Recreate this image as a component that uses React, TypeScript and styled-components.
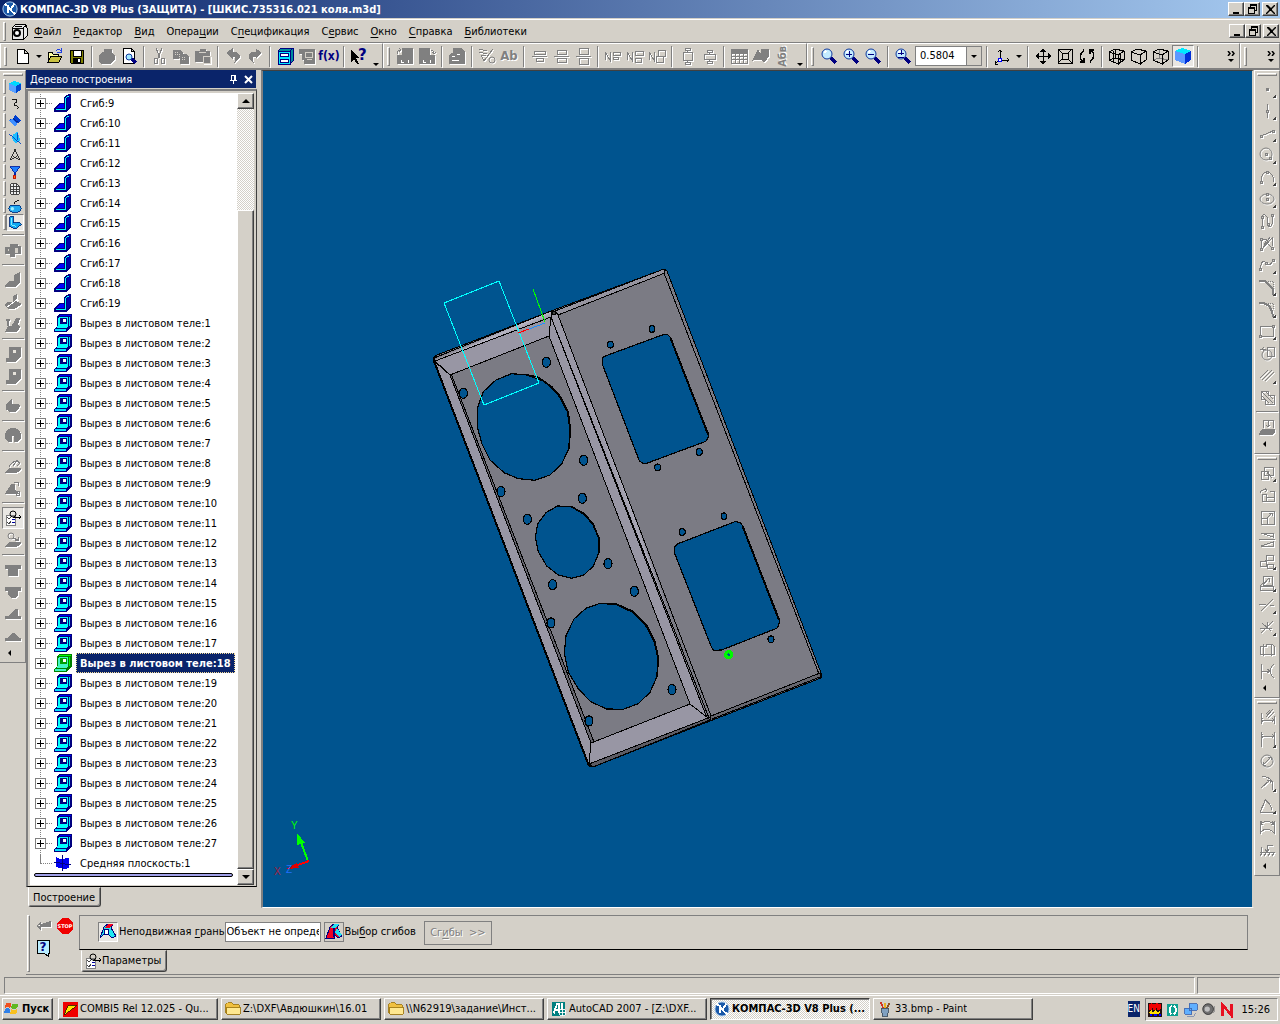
import React, { ReactNode } from "react";
import styled, { createGlobalStyle, css } from "styled-components";

const FACE = "#d4d0c8";
const SHADOW = "#808080";
const NAVY = "#0a246a";
const FONT = '"DejaVu Sans Condensed", "DejaVu Sans", "Noto Sans", sans-serif';

const Global = createGlobalStyle`
  * { box-sizing: border-box; }
  body { margin: 0; background: ${FACE}; font: 11px/14px ${FONT}; color: #000; }
  button, input, select { font: inherit; color: inherit; margin: 0; border-radius: 0; }
  button { padding: 0; border: 0; background: transparent; }
  u { text-underline-offset: 2px; }
`;

const raised = css`
  border: 1px solid;
  border-color: #fff #404040 #404040 #fff;
  box-shadow: inset -1px -1px 0 ${SHADOW};
  background: ${FACE};
`;
const pressed = css`
  border: 1px solid;
  border-color: ${SHADOW} #fff #fff ${SHADOW};
  background: #e9e7e3;
`;

/* ---------- icons, drawn on an 18 x 18 grid ---------- */
const lens = (
  <>
    <path d="M11 11L16 16" stroke="#000080" strokeWidth="3" />
    <circle cx="7" cy="7" r="5" fill="#c4ecff" stroke="#10389c" />
    <path d="M4 6L6 4" stroke="#fff" strokeWidth="2" />
  </>
);
const cube = "M3 5L9 2L15 5V12L9 16L3 12ZM3 5L9 8L15 5M9 8V16";
const cubeFront = "M1 5L10 8V17L1 13ZM1 5L7 2L16 4V13L10 17M10 8L16 4";
const corner = <path d="M18 14V18H14Z" fill="#404040" stroke="none" />;
const P = (d: string, fill = false) => <path d={d} fill={fill ? "currentColor" : "none"} stroke="currentColor" />;
const nodes = (...pts: number[][]) =>
  pts.map(([x, y]) => <rect key={`${x}-${y}`} x={x - 1} y={y - 1} width="2" height="2" fill={FACE} stroke="currentColor" />);

const icons: Record<string, ReactNode> = {
  new: <path d="M4 2H11L15 6V16H4ZM11 2V6H15" fill="#fff" stroke="#000" />,
  open: (
    <>
      <path d="M2 15V5H6L7 7H12V9" fill="#ffffa0" stroke="#000" />
      <path d="M2 15L5 9H16L13 15Z" fill="#c8c040" stroke="#000" />
      <path d="M10 4Q13 1 15 4M15 1V5H11" fill="none" stroke="#2040e0" />
    </>
  ),
  save: (
    <>
      <path d="M2 3H15V16H3L2 15Z" fill="#808000" stroke="#000" />
      <path d="M5 3H13V9H5Z" fill="#fff" stroke="#000" />
      <path d="M5 11H13V16H5Z" fill="#000" />
      <path d="M10 12H12V15H10Z" fill="#fff" />
    </>
  ),
  print: P("M2 8L6 5L7 2H14L13 6L16 8V13L13 16H3L1 13Z", true),
  preview: (
    <>
      <path d="M3 1H11L14 4V16H3ZM11 1V4H14" fill="#fff" stroke="#000" />
      <path d="M12 12L16 16" stroke="#000080" strokeWidth="3" />
      <circle cx="9" cy="10" r="3" fill="#a0e8ff" stroke="#10389c" />
    </>
  ),
  cut: (
    <>
      {P("M6 1L10 11M12 1L8 11")}
      <path d="M4 11H7V16H4ZM11 11H14V16H11Z" fill="none" stroke="currentColor" />
    </>
  ),
  copy: (
    <>
      {P("M1 3H8L10 5V11H1Z", true)}
      {P("M8 7H14L16 9V16H8Z", true)}
      <path d="M3 5H7M3 7H7M10 10H14M10 12H14M7 7V14" stroke={FACE} strokeDasharray="1 1" />
    </>
  ),
  paste: (
    <>
      {P("M1 4H6V2H11V4H15V14H1Z", true)}
      <path d="M5 5H12M9 9H16V16H9Z" fill={SHADOW} stroke={FACE} />
    </>
  ),
  undo: P("M3 6L8 2V5H12L15 8V11L11 15L12 11L10 9H8V11Z", true),
  redo: P("M15 6L10 2V5H6L3 8V11L7 15L6 11L8 9H10V11Z", true),
  lib: (
    <>
      <path d="M2 4L5 1H17V14L14 17H2Z" fill="#008c9c" stroke="#000080" />
      <path d="M2 4H14V17H2Z" fill="#00e8ff" stroke="#000080" />
      <path d="M4 6H12V9H4ZM4 12H12V15H4Z" fill="#fff" stroke="#000080" />
      <path d="M14 4L17 1" stroke="#000080" />
    </>
  ),
  props: (
    <>
      {P("M1 2H16V16H6V12H4V6H1Z", true)}
      <path d="M7 5H14V10H7ZM9 12H14" fill="none" stroke={FACE} />
    </>
  ),
  help: (
    <>
      <path d="M1 3V15L4 12L7 17H9L6 11H10Z" fill="#000" />
      <text x="8" y="13" fontSize="15" fontWeight="bold" fill="#000080">?</text>
    </>
  ),
  docL: (
    <>
      <path d="M6 1H17V17H1V8H6Z" fill="currentColor" />
      <path d="M1 7Q1 3 5 3M3 1L5 3L3 5" fill="none" stroke="currentColor" />
      <path d="M5 13V15H8M12 13V16" fill="none" stroke="#fff" />
    </>
  ),
  docR: (
    <>
      <path d="M1 1H12V8H17V17H1Z" fill="currentColor" />
      <path d="M13 3Q16 3 16 7M14 5L16 7L18 5" fill="none" stroke="currentColor" />
      <path d="M5 13V15H8M12 13V16" fill="none" stroke="#fff" />
    </>
  ),
  docs: (
    <>
      {P("M5 1H13L16 4V16H1V9L5 6Z", true)}
      <path d="M4 9H7M9 7H12M4 13H11" stroke="#fff" />
    </>
  ),
  rough: (
    <>
      {P("M1 3Q3 1 5 3T9 3M1 6Q3 4 5 6T9 6M3 8L6 14L15 2M3 8H8")}
      <circle cx="14" cy="13" r="3" fill="none" stroke="currentColor" />
    </>
  ),
  alignA: P("M4 4H15V7H4ZM2 9H17M6 11H13V14H6Z"),
  alignB: P("M5 3H14V7H5ZM2 9H17M5 11H14V15H5Z"),
  alignC: P("M5 1H14V7H5ZM2 9H17M5 11H14V17H5Z"),
  nA: P("M1 13V5L6 13V5M9 5H16V8H9ZM9 10H14V12H9Z"),
  nB: P("M1 13V5L6 13V5M9 4H17V8H9ZM9 11H15V15H9Z"),
  nC: P("M1 13V5L6 13V5M10 3H17V9H10ZM8 9H15V15H8Z"),
  boxA: P("M5 5H14V13H5ZM7 1H12V3H7ZM7 15H12V17H7ZM9 3V5M9 13V15"),
  boxB: P("M4 7H15V12H4ZM7 3H12V5H7ZM7 14H12V16H7ZM9 5V7M9 12V14"),
  table: (
    <>
      {P("M1 2H17V16H1ZM1 6H17M1 9H17M1 12H17M5 6V16M9 6V16M13 6V16")}
      <path d="M1 2H17V6H1Z" fill="currentColor" />
    </>
  ),
  shapes: P("M1 13L6 3L9 8V2H16V10L12 15L9 12Z", true),
  lens,
  plus: <>{lens}<path d="M7 4V10M4 7H10" stroke="#000080" /></>,
  minus: <>{lens}<path d="M4 7H10" stroke="#000080" /></>,
  plusminus: <>{lens}<path d="M7 3V8M4 6H10M4 10H10" stroke="#000080" /></>,
  axes: (
    <>
      <path d="M7 13V3M5 5L7 3L9 5M7 13H16M14 11L16 13L14 15M6 13L2 17M2 14V17H5" fill="none" stroke="#000" />
      <rect x="5" y="11" width="3" height="3" fill="#fff" stroke="#00f" />
    </>
  ),
  move: (
    <>
      <path d="M9 2V17M2 9H17" stroke="#000" fill="none" />
      <path d="M9 1L12 5H6ZM9 18L12 14H6ZM1 9L5 6V12ZM18 9L14 6V12Z" fill="#000" />
    </>
  ),
  fit: P("M2 2H16V16H2ZM6 6H12V12H6ZM2 2L6 6M16 2L12 6M2 16L6 12M16 16L12 12"),
  rotate: <path d="M6 3Q-1 9 5 15M2 15H6V11M12 15Q19 9 13 3M16 3H12V7" fill="none" stroke="#000" strokeWidth="1.5" />,
  wire: P(cubeFront + "M7 2V11M1 13L7 11L16 13M5 4V14M12 7V15"),
  hidden: P(cubeFront),
  thin: <><path d="M7 2V11M7 11L1 13M7 11L16 13" stroke={SHADOW} fill="none" />{P(cubeFront)}</>,
  shaded: (
    <>
      <path d="M1 4L8 1L17 4L11 7Z" fill="#00e8ff" />
      <path d="M1 4L11 7V17L1 13Z" fill="#5c98ff" />
      <path d="M11 7L17 4V13L11 17Z" fill="#0030d8" />
    </>
  ),
  body: (
    <>
      <path d="M2 5L8 2L16 5L10 8Z" fill="#00d8ff" />
      <path d="M2 5L10 8V16L2 12Z" fill="#58a0ff" />
      <path d="M10 8L16 5V12L10 16Z" fill="#0048d0" />
    </>
  ),
  curve: <path d="M6 4Q12 2 11 7Q6 9 9 11Q14 11 12 15" fill="none" stroke="#000" />,
  plane: <><path d="M2 8L7 6L9 2L16 9L12 11L9 15Z" fill="#0040d0" /><path d="M2 8L6 7L12 12L9 15Z" fill="#4090ff" /><path d="M7 6L13 11" stroke="#002080" /></>,
  surf: <><path d="M7 5L12 2L15 12L9 15L5 8Z" fill="#20c0ff" /><path d="M2 4L16 16M12 3V11" stroke="#0040c0" /></>,
  compass: <path d="M3 15L9 4L15 15M6 10L15 15M12 10L3 15M8 3H10V5H8Z" fill="none" stroke="#202020" />,
  filter: <><path d="M3 3H15L10 9V12H8V9Z" fill="#2080ff" stroke="#0020a0" /><rect x="7" y="13" width="3" height="3" fill="#ff8000" stroke="#c00000" /></>,
  spec: <path d="M4 3H11L14 6V15H4ZM4 6H14M4 9H14M4 12H14M7 3V15M11 3V15" fill="#eee" stroke="#333" />,
  weld: <><rect x="2" y="8" width="14" height="8" rx="4" fill="#20a8f0" stroke="#003080" /><circle cx="6" cy="12" r="2" fill="#a0f0ff" /><path d="M8 7Q8 3 14 3" fill="none" stroke="#000" /></>,
  sheet: <><path d="M3 2L7 1V9L14 8L16 11L9 16L3 13Z" fill="#10a8f0" stroke="#002878" /><path d="M5 3V11L10 13" fill="none" stroke="#90f0ff" /></>,
  g1: <>{P("M1 6H6V3H13V5H16V12H10V15H6V12H1Z", true)}<path d="M11 7H13V11H11ZM4 8V10" fill={FACE} stroke={FACE} /></>,
  g2: <path d="M1 15L5 10H10V4L16 1V11L12 16H1Z" fill="currentColor" />,
  g3: <>{P("M1 12L5 9H9V4L12 2V9L17 11L11 15H4Z", true)}<path d="M3 14L14 6" stroke="#fff" /></>,
  g4: <>{P("M2 16L5 11H8L13 3H16L13 10L16 12L13 16Z", true)}<path d="M4 11V4M2 5H6" stroke="currentColor" strokeWidth="2" /></>,
  g5: <>{P("M5 2H16V12L12 16H2V13H5Z", true)}<rect x="9" y="5" width="3" height="3" fill="#e8e4dc" /></>,
  g6: P("M2 8L7 3V7H13L16 9L12 14L7 15L2 12Z", true),
  g7: <path d="M1 12Q0 1 9 1Q18 1 17 12L13 15H10V9H8V15H5Z" fill="currentColor" />,
  g8: <>{P("M2 15L6 11H16V13L13 15Z", true)}{P("M5 10Q8 3 15 5M9 9L12 5M12 3L16 6L13 9")}</>,
  g9: <>{P("M2 14L8 5H10V11L14 14Z", true)}{P("M10 3H14V7M12 12H15V16H12Z")}</>,
  dim: (
    <>
      <path d="M2 6H11V16H2Z" fill="#fff" stroke={SHADOW} />
      <path d="M3 8L5 10L7 8M3 13L5 15L7 12" fill="none" stroke="#444" />
      <path d="M8 10H11M8 13H11" stroke="#0000a0" />
      <circle cx="9" cy="5" r="3" fill="none" stroke="#000" />
      <path d="M9 8H17M15 6L17 8L15 10" fill="none" stroke="#000" />
    </>
  ),
  g10: <>{P("M2 15L6 11H16V13L13 15Z", true)}<circle cx="7" cy="5" r="3" fill="none" stroke="currentColor" />{P("M9 7L14 9M14 6V9H11")}</>,
  t1: <path d="M1 4H17V8H14V15H4V8H1Z" fill="currentColor" />,
  t2: <path d="M1 4H17V8H14V12L11 15H7L4 12V8H1Z" fill="currentColor" />,
  t3: <path d="M1 11H5L11 4H14V11H17V14H1Z" fill="currentColor" />,
  t4: <path d="M1 11H3L8 6H10L15 11H17V14H1Z" fill="currentColor" />,
  point: <><rect x="8" y="8" width="3" height="3" fill="currentColor" />{corner}</>,
  vline: <>{P("M9 2V16")}{nodes([9, 9])}{corner}</>,
  seg: <>{P("M3 12L15 7")}{nodes([3, 12], [15, 7])}{corner}</>,
  circ: <><circle cx="8" cy="8" r="6" fill="none" stroke="currentColor" />{nodes([8, 8], [12, 12])}{corner}</>,
  arc: <>{P("M3 14Q3 4 9 4T16 14")}{nodes([3, 14], [9, 4])}{corner}</>,
  ell: <><ellipse cx="9" cy="9" rx="7" ry="5" fill="none" stroke="currentColor" />{nodes([9, 9], [9, 4])}{corner}</>,
  wave: <>{P("M4 15V5Q6 0 9 5V12Q12 18 14 12V3")}{nodes([4, 5], [4, 15], [10, 12], [14, 3])}</>,
  wave2: <>{P("M3 15V5M5 14L14 4V12M3 5H9L5 14L12 3M9 9L14 14")}{nodes([3, 5], [3, 15], [14, 14])}</>,
  spline: <>{P("M2 13Q4 2 8 7T15 4")}{nodes([2, 13], [8, 7], [15, 4])}{corner}</>,
  chamfer: <><path d="M1 3H7L15 11V17" fill="none" stroke="currentColor" strokeWidth="2" /><path d="M8 3H15V10" fill="none" stroke="currentColor" strokeDasharray="1 1" />{corner}</>,
  fillet: <><path d="M1 3H5Q14 5 15 17" fill="none" stroke="currentColor" strokeWidth="2" /><path d="M8 3H15V10" fill="none" stroke="currentColor" strokeDasharray="1 1" />{corner}</>,
  rect: <>{P("M2 4H15V14H2Z")}{nodes([2, 14], [15, 4])}{corner}</>,
  collect: <>{P("M9 3H16V12H9ZM2 5H8M6 3L4 5L6 7")}<circle cx="9" cy="11" r="5" fill="none" stroke="currentColor" /></>,
  hatch: <>{P("M2 12L10 4M4 14L14 4M7 15L16 6")}{corner}</>,
  hatchbox: P("M3 3H10V7H16V16H7V11H3ZM4 4L15 15M4 8L8 12M8 4L15 11M11 15L8 12"),
  project: <><path d="M1 16L4 11H17V14L15 17H1Z" fill="currentColor" />{P("M5 10V2H15V10M10 3V9M8 7L10 9L12 7")}</>,
  m1: <>{P("M3 7H10V15H3ZM6 3H15V11H6ZM8 7L14 14")}{corner}</>,
  m2: P("M4 8H8V15H4ZM8 15H16V11H8M12 5H16V15M2 7Q3 3 9 4M7 2L9 4L7 6"),
  m3: P("M3 3H16V16H3ZM3 10H9V16M9 10L14 5M11 5H14V8"),
  m4: P("M3 3L15 7V3ZM3 16L15 12V16ZM1 9H17"),
  m5: <>{P("M8 3H15V8H8ZM2 9H8V14H2ZM9 12H15V16H9ZM8 8L7 9")}{corner}</>,
  m6: <>{P("M5 2H14V11H5ZM2 12H15V16H2ZM5 11L11 4M11 4V8M2 12L5 9")}{corner}</>,
  m7: <>{P("M3 15L15 3M1 8H8M12 9H16")}{corner}</>,
  m8: <>{P("M3 15L15 3M4 5L13 13M2 10H14M9 4V10")}{corner}</>,
  m9: P("M2 6H8V4H14L16 6V14H2ZM5 4V16M13 4V16"),
  m10: P("M3 2V17M3 9H12M9 7L12 9L9 11M16 2Q8 9 16 16"),
  d1: P("M3 5V16M16 8V16M3 12H16M5 10L3 12L5 14M14 10L16 12L14 14M8 9L15 1M10 10L16 4M12 2L8 6"),
  d2: <>{P("M3 2V17M16 2V17M3 6H16M5 4L3 6L5 8M14 4L16 6L14 8")}{corner}</>,
  d3: <><circle cx="9" cy="9" r="6" fill="none" stroke="currentColor" />{P("M5 13L13 5M10 5H13V8M5 10V13H8")}</>,
  d4: <>{P("M4 2Q18 4 14 16M3 14L12 6M9 6H12V9")}{corner}</>,
  d5: <>{P("M2 16H16M2 16L8 3M6 4Q12 6 14 14M6 7V4H9")}{corner}</>,
  d6: P("M2 3V16M16 3V16M2 15Q9 7 16 15M2 6Q9 1 16 6M4 3L2 6L5 7M14 3L16 6L13 7"),
  d7: P("M2 12H17M2 16L5 12M6 16L9 12M10 16L13 12M14 16L17 12M9 12V5H15M7 9L9 12L11 9M3 7V12"),
  fold: (
    <>
      <path d="M0 15L5 9H10V4L12 1L16 0H17V13L13 18H0Z" fill="#000080" />
      <path d="M2 14L6 10H10V13L9 14Z" fill="#0000ff" />
      <path d="M13 3L16 1V12L13 15Z" fill="#0000a8" />
      <path d="M11 4H12V15H11ZM2 15H12V16H2ZM12 3H13V4H12ZM13 2H15V3H13Z" fill="#00ffff" />
    </>
  ),
  cutout: (
    <>
      <path d="M3 2L5 0H18V12L13 18H0V15L3 12Z" fill="#000080" />
      <path d="M5 3H14V12L12 14H3L4 11V4Z" fill="#00ffff" />
      <path d="M1 15H12V17H1ZM15 3H16V12H15Z" fill="#00e0ff" />
      <path d="M6 4H13V10H6Z" fill="#000080" />
      <path d="M9 5H12V8H9Z" fill="#fff" />
      <path d="M6 1H17V2H6Z" fill="#0000ff" />
    </>
  ),
  cutoutSel: (
    <>
      <path d="M3 2L5 0H18V12L13 18H0V15L3 12Z" fill="#008000" />
      <path d="M5 3H14V12L12 14H3L4 11V4ZM1 15H12V17H1Z" fill="#40f8c0" />
      <path d="M6 4H13V10H6Z" fill="#00a000" />
      <path d="M9 5H12V8H9Z" fill="#fff" />
      <path d="M5 1H17V2H5ZM15 3H16V12H15Z" fill="#00ff00" />
    </>
  ),
  mid: <><path d="M2 3L6 5L15 4V14L11 15L2 13Z" fill="#0000f0" /><path d="M8 1V17M0 8L17 11" stroke="#000080" /></>,
  enter: <path d="M16 4V9H3M6 6L3 9L6 12Z" fill="currentColor" stroke="currentColor" />,
  stop: (
    <>
      <path d="M6 1H12L17 6V12L12 17H6L1 12V6Z" fill="#f00000" />
      <text x="9" y="11" fontSize="5" fontWeight="bold" textAnchor="middle" fill="#fff">STOP</text>
    </>
  ),
  tip: (
    <>
      <path d="M3 1H15V14H14V17L10 14H3Z" fill="#b8ecff" stroke="#000" />
      <text x="9" y="12" fontSize="12" fontWeight="bold" textAnchor="middle" fill="#000080">?</text>
    </>
  ),
  face: (
    <>
      <path d="M5 4L9 1H14L12 5L17 13L13 15L9 11H5L1 15Z" fill="#20e8f0" stroke="#000080" />
      <path d="M9 1H14L11 5H5Z" fill="#f00020" />
      <path d="M5 6H9V11H5Z" fill="#fff" stroke="#000080" />
    </>
  ),
  bends: (
    <>
      <path d="M5 4L9 1H14L12 5L17 13L13 15L9 11V15L1 15Z" fill="#f00020" stroke="#000080" />
      <path d="M9 1H14L11 5H5ZM12 5L17 12L14 14L10 9Z" fill="#20e0f0" />
      <path d="M9 5V14" stroke="#000080" strokeWidth="2" />
    </>
  ),
  app: (
    <>
      <circle cx="9" cy="9" r="8" fill="#1a58a8" stroke="#b8d8f8" />
      <path d="M3 3L10 9L14 3M7 8L15 15M7 5V13" fill="none" stroke="#fff" strokeWidth="2" />
    </>
  ),
  doc: (
    <>
      <path d="M2 6L6 2H15L17 6V14L14 17H2Z" fill="#e8e8e8" stroke="#000" />
      <path d="M2 6H13V17M13 6L17 3M5 4H12" stroke="#000" fill="none" />
      <circle cx="7" cy="11" r="3" fill="#fff" stroke="#000" strokeWidth="2" />
    </>
  ),
  flag: (
    <>
      <path d="M2 3Q5 1 8 3L7 8Q4 6 1 8Z" fill="#f05020" />
      <path d="M9 3Q12 5 16 3L15 8Q11 10 8 8Z" fill="#60b820" />
      <path d="M1 9Q4 7 7 9L6 14Q3 12 0 14Z" fill="#3080e8" />
      <path d="M8 9Q11 11 15 9L14 14Q10 16 7 14Z" fill="#f8c020" />
    </>
  ),
  combi: <><path d="M1 1H18V18H1Z" fill="#f00000" /><path d="M2 16L7 5H17L5 14Z" fill="#ffe800" stroke="#402000" /></>,
  folder: <><path d="M1 14V4L3 2H8L10 4H16V14Z" fill="#f0c040" stroke="#a07810" /><path d="M2 7H17V15H2Z" fill="#ffe890" stroke="#a07810" /></>,
  acad: (
    <>
      <path d="M1 1H16V17H1Z" fill="#008080" />
      <path d="M3 14L7 3H9V14M5 10H9M12 2V10" stroke="#fff" strokeWidth="2" fill="none" />
      <path d="M10 10H16V16H10ZM13 9V17M9 13H17" stroke="#fff" fill="none" />
    </>
  ),
  paint: (
    <>
      <path d="M5 8H13L12 17H6Z" fill="#80a0c0" stroke="#405060" />
      <path d="M7 8L4 1" stroke="#d03020" strokeWidth="2" /><path d="M9 8V2" stroke="#e8b020" strokeWidth="2" /><path d="M11 8L14 2" stroke="#905020" strokeWidth="2" />
    </>
  ),
  trayA: <><path d="M1 1H17V17H1Z" fill="#201010" /><path d="M2 3L5 1L8 3L11 1L16 3L15 9H12L11 6L10 9H7L6 6L5 9H2Z" fill="#f00000" /><path d="M2 12L5 9L7 12L10 9L12 12L15 9V12L13 14H4Z" fill="#ffe000" /><path d="M3 15H6M8 15H11M13 15H16" stroke="#0000ff" strokeWidth="2" /></>,
  trayB: <><path d="M2 2H15V16H2Z" fill="#10a090" /><path d="M8 4Q3 7 7 14M10 4Q15 9 10 14" stroke="#fff" strokeWidth="2" fill="none" /></>,
  trayC: <><path d="M7 2H16V9H7ZM2 7H10V14H2Z" fill="#60b0ff" stroke="#4068b0" /><path d="M4 16H12L15 12" stroke="#8090b0" fill="none" /></>,
  trayD: <><circle cx="8" cy="8" r="6" fill="#707070" stroke="#303030" /><circle cx="7" cy="8" r="3" fill="#c0c0c0" /><path d="M14 12Q17 9 15 5" stroke="#909090" fill="none" /></>,
  trayE: <path d="M4 16V3L14 15V2" fill="none" stroke="#e81020" strokeWidth="3" />,
};

const Svg = styled.svg<{ $off?: boolean }>`
  display: block;
  flex: none;
  color: ${(p) => (p.$off ? SHADOW : "#000")};
  filter: ${(p) => (p.$off ? "drop-shadow(1px 1px 0 #fff)" : "none")};
  circle, ellipse { shape-rendering: auto; }
`;
const Icon = ({ name, off, size = 18 }: { name: string; off?: boolean; size?: number }) => (
  <Svg $off={off} width={size} height={size} viewBox="0 0 18 18" shapeRendering="crispEdges" fontFamily="DejaVu Sans" aria-hidden>
    {icons[name]}
  </Svg>
);

/* ---------- frame ---------- */
const Window = styled.div`
  display: flex;
  flex-direction: column;
  min-height: 100vh;
  background: ${FACE};
  overflow: hidden;
`;
const TitleBar = styled.header`
  display: flex;
  align-items: center;
  height: 18px;
  padding: 0 2px;
  gap: 2px;
  background: linear-gradient(90deg, ${NAVY}, #a6caf0);
  color: #fff;
  font-weight: bold;
`;
const Title = styled.h1`
  flex: 1;
  margin: 0;
  padding-top: 1px;
  font: inherit;
  white-space: nowrap;
`;
const WinButtons = styled.div`
  display: flex;
  align-items: center;
  & > :last-child { margin-left: 2px; }
`;
const WinButton = styled.button`
  ${raised}
  display: grid;
  place-items: center;
  width: 16px;
  height: 14px;
`;
const windowControls = [
  { label: "Свернуть", d: "M2 8H8V10H2Z" },
  { label: "Восстановить", d: "M3 0H10V7H8V6H9V2H4V3H3ZM1 3H8V10H1ZM2 5V9H7V5Z" },
  { label: "Закрыть", d: "M1 1H3L5 3L6 4L7 3L9 1H10V2L7 5V6L10 9V10H9L6 7H5L2 10H1V9L4 6V5L1 2Z" },
];
const WindowControls = () => (
  <WinButtons>
    {windowControls.map(({ label, d }) => (
      <WinButton key={label} aria-label={label}>
        <svg width="11" height="11" viewBox="0 0 11 11">
          <path d={d} fill="#000" fillRule="evenodd" />
        </svg>
      </WinButton>
    ))}
  </WinButtons>
);
const MenuBar = styled.nav`
  display: flex;
  align-items: center;
  height: 24px;
  margin-top: 1px;
  padding: 0 1px 0 3px;
  border-top: 1px solid #fff;
  border-bottom: 1px solid ${SHADOW};
`;
const Grip = styled.span<{ $flat?: boolean }>`
  flex: none;
  border: 1px solid;
  border-color: #fff ${SHADOW} ${SHADOW} #fff;
  ${(p) => (p.$flat ? "height: 3px; width: 20px; margin: 2px auto;" : "width: 3px; height: 19px; margin: 0 4px 0 0;")}
`;
const MenuItem = styled.button`
  padding: 1px 6px 0;
  white-space: nowrap;
`;
const Spacer = styled.span`
  flex: 1;
`;
const ToolRow = styled.div`
  display: flex;
  height: 27px;
  border-bottom: 2px solid ${SHADOW};
`;
const ToolBar = styled.div<{ $grow?: boolean; $min?: number }>`
  display: flex;
  align-items: center;
  flex: ${(p) => (p.$grow ? "1 1 auto" : "0 0 auto")};
  min-width: ${(p) => p.$min ?? 0}px;
  padding: 0 1px 0 3px;
  border: solid;
  border-width: 1px 1px 0 1px;
  border-color: #fff ${SHADOW} #fff #fff;
`;
const Tool = styled.button<{ $on?: boolean }>`
  display: grid;
  place-items: center;
  flex: none;
  width: 22px;
  height: 22px;
  ${(p) => p.$on && pressed}
`;
const Sep = styled.span<{ $flat?: boolean }>`
  flex: none;
  background: ${SHADOW};
  box-shadow: 1px 1px 0 #fff;
  ${(p) => (p.$flat ? "height: 1px; width: 22px; margin: 3px 0 4px;" : "width: 1px; height: 21px; margin: 0 4px 0 3px;")}
`;
const Arrow = styled.button<{ $low?: boolean }>`
  width: 11px;
  height: 20px;
  display: grid;
  place-items: ${(p) => (p.$low ? "end" : "center")} center;
  &::after {
    content: "";
    border: solid transparent;
    border-width: 3px 3px 0;
    border-top-color: #000;
  }
`;
const More = styled.button`
  display: grid;
  justify-items: center;
  align-content: center;
  width: 14px;
  gap: 3px;
`;
const MoreTools = () => (
  <More aria-label="Ещё кнопки">
    <svg width="9" height="5" viewBox="0 0 9 5"><path d="M1 0L3 2.5L1 5M5 0L7 2.5L5 5" fill="none" stroke="#000" strokeWidth="1.5" /></svg>
    <svg width="6" height="3" viewBox="0 0 6 3"><path d="M0 0H6L3 3Z" /></svg>
  </More>
);
const Fx = styled.span`
  color: #000080;
  font-size: 12px;
  font-weight: bold;
`;
const Glyph = styled.span<{ $turn?: boolean }>`
  color: ${SHADOW};
  font-size: ${(p) => (p.$turn ? 11 : 13)}px;
  font-weight: bold;
  text-shadow: 1px 1px 0 #fff;
  writing-mode: ${(p) => (p.$turn ? "sideways-lr" : "horizontal-tb")};
`;
const ComboWrap = styled.label`
  display: flex;
  width: 67px;
  height: 20px;
  margin: 0 1px;
  border: 1px solid ${SHADOW};
  background: #fff;
`;
const Combo = styled.select`
  appearance: none;
  flex: 1;
  min-width: 0;
  border: 0;
  padding: 0 0 0 4px;
  background: #fff;
`;
const ComboArrow = styled.span`
  display: grid;
  place-items: center;
  width: 15px;
  border-left: 1px solid ${SHADOW};
  background: ${FACE};
  &::after {
    content: "";
    border: solid transparent;
    border-width: 3px 3px 0;
    border-top-color: #000;
  }
`;

const coloured = new Set(["new", "open", "save", "preview", "lib", "help", "lens", "plus", "minus", "plusminus", "axes", "move", "fit", "rotate", "wire", "hidden", "thin", "shaded"]);
const Tools = ({ list }: { list: string }) => (
  <>
    {list.split(" ").map((n, i) => {
      if (n === "|") return <Sep key={i} />;
      if (n === "v" || n === "_") return <Arrow key={i} $low={n === "_"} aria-label="Список" />;
      if (n === "fx") return <Tool key={i}><Fx>f(x)</Fx></Tool>;
      if (n === "Ab") return <Tool key={i}><Glyph>Ab</Glyph></Tool>;
      if (n === "turn") return <Tool key={i}><Glyph $turn>Абв</Glyph></Tool>;
      return (
        <Tool key={i} $on={n === "shaded"} aria-label={n}>
          <Icon name={n} off={!coloured.has(n)} />
        </Tool>
      );
    })}
  </>
);

/* ---------- work area ---------- */
const Main = styled.main`
  display: flex;
  flex: 1;
`;
const SideBar = styled.div`
  display: flex;
  flex-direction: column;
  width: 26px;
  flex: none;
`;
const SideGroup = styled.div<{ $right?: boolean }>`
  display: flex;
  flex-direction: column;
  align-items: center;
  padding: 0 0 4px;
  border: solid;
  border-width: 1px 1px 1px ${(p) => (p.$right ? 1 : 0)}px;
  border-color: #fff ${SHADOW} ${SHADOW} #fff;
`;
const ModeRow = styled.div`
  display: flex;
  align-items: center;
  align-self: stretch;
  height: 17px;
  padding-left: 3px;
`;
const ModeGrip = styled.span`
  width: 3px;
  height: 15px;
  border: 1px solid;
  border-color: #fff ${SHADOW} ${SHADOW} #fff;
`;
const ModeButton = styled.button<{ $on?: boolean }>`
  display: grid;
  place-items: center;
  width: 18px;
  height: 17px;
  ${(p) => p.$on && pressed}
`;
const LeftArrow = styled.button`
  width: 20px;
  height: 11px;
  padding-right: 6px;
  display: grid;
  place-items: center;
  &::after {
    content: "";
    border: solid transparent;
    border-width: 3px 3px 3px 0;
    border-right-color: #000;
  }
`;

const TreePanel = styled.section`
  display: flex;
  flex-direction: column;
  flex: none;
  width: 235px;
  padding: 0 4px 1px 0;
`;
const PanelTitle = styled.h2`
  display: flex;
  align-items: center;
  height: 18px;
  margin: 0 1px 1px 0;
  padding: 1px 0 0 4px;
  background: ${NAVY};
  color: #fff;
  font-size: 11px;
  font-weight: normal;
`;
const PanelButton = styled.button`
  width: 15px;
  height: 14px;
  display: grid;
  place-items: center;
`;
const TreeFrame = styled.div`
  display: flex;
  flex: 1;
  border: solid;
  border-width: 2px 1px 1px 2px;
  border-color: ${SHADOW} #404040 #000 ${SHADOW};
  padding: 2px 2px 1px;
`;
const Tree = styled.ul`
  flex: 1;
  min-width: 0;
  margin: 0;
  padding: 0 0 7px;
  list-style: none;
  background: #fff;
`;
const Row = styled.li<{ $last?: boolean }>`
  display: flex;
  align-items: center;
  height: 20px;
  padding-left: 5px;
  background: linear-gradient(#fff 50%, transparent 50%) 10px 0 / 1px 2px ${(p) => (p.$last ? "no-repeat" : "repeat-y")},
    linear-gradient(${SHADOW}, ${SHADOW}) 10px 0 / 1px ${(p) => (p.$last ? "10px" : "20px")} no-repeat;
`;
const Expander = styled.button`
  display: grid;
  place-items: center;
  width: 11px;
  height: 11px;
  border: 1px solid ${SHADOW};
  background: linear-gradient(#000, #000) center / 7px 1px no-repeat, linear-gradient(#000, #000) center / 1px 7px no-repeat, #fff;
`;
const Dots = styled.span<{ $wide?: boolean }>`
  width: ${(p) => (p.$wide ? 12 : 6)}px;
  margin: 0 2px 0 ${(p) => (p.$wide ? 5 : 0)}px;
  border-top: 1px dotted ${SHADOW};
`;
const Label = styled.span<{ $on?: boolean }>`
  margin-left: 4px;
  padding: 3px 0 1px 4px;
  white-space: nowrap;
  line-height: 16px;
  ${(p) => p.$on && css`
    background: ${NAVY};
    color: #fff;
    font-weight: bold;
    outline: 1px dotted #f5db95;
    outline-offset: -1px;
    padding: 3px 4px 1px 4px;
  `}
`;
const TreeEnd = styled.li`
  height: 4px;
  margin: 0 4px;
  border: 1px solid #000;
  border-radius: 2px;
  background: #a0a0e8;
`;
const ScrollBar = styled.div`
  display: flex;
  flex-direction: column;
  width: 17px;
  background: repeating-conic-gradient(#fff 0 25%, ${FACE} 0 50%) 0 0 / 2px 2px;
`;
const ScrollButton = styled.button<{ $up?: boolean }>`
  ${raised}
  height: 16px;
  display: grid;
  place-items: center;
  &::after {
    content: "";
    border: solid transparent;
    border-width: ${(p) => (p.$up ? "0 4px 4px" : "4px 4px 0")};
    border-color: #000 transparent;
  }
`;
const Gap = styled.div`
  flex: 101;
`;
const Thumb = styled.div`
  ${raised}
  flex: 658;
`;
const Tab = styled.button`
  display: flex;
  align-items: center;
  align-self: flex-start;
  height: 20px;
  margin-left: 2px;
  padding: 1px 5px 0 4px;
  border: 1px solid;
  border-color: transparent #404040 #404040 #fff;
  border-radius: 0 0 3px 3px;
  box-shadow: inset -1px -1px 0 ${SHADOW};
`;
const Viewport = styled.section`
  flex: 1;
  min-width: 0;
  background: #00548f;
  border: solid;
  border-width: 1px 2px 1px 2px;
  border-color: #404040 ${FACE} #fff ${SHADOW};
  overflow: hidden;
`;
const Scene = styled.svg`
  display: block;
`;

const hole = (x: number, y: number, rx = 12, ry = 15) => <ellipse key={`${x},${y}`} cx={x} cy={y} rx={rx} ry={ry} />;

const Model = () => (
  <Scene width="988" height="832" viewBox="263 71 988 832" shapeRendering="crispEdges" role="img" aria-label="Модель">
    <defs>
      <linearGradient id="rim" gradientUnits="userSpaceOnUse" x1="490" y1="333" x2="494" y2="342">
        <stop offset="0" stopColor="#6c6b74" /><stop offset=".5" stopColor="#b8b6c4" /><stop offset="1" stopColor="#9896a4" />
      </linearGradient>
      <linearGradient id="ridge" gradientUnits="userSpaceOnUse" x1="622" y1="500" x2="631" y2="497">
        <stop offset="0" stopColor="#9a98a6" /><stop offset=".6" stopColor="#aaa8b6" /><stop offset="1" stopColor="#7b7b84" />
      </linearGradient>
    </defs>
    <g stroke="#000" strokeLinejoin="round">
      <path d="M434 361L433 358L437 355L551 311L664 269L667 271L821 673L821 678L710 721L593 767L589 766Z" fill="#7b7b84" />
      <path d="M434 358L551 311V317L435 361Z" fill="url(#rim)" />
      <path d="M555 311L664 269L665 273L558 315Z" fill="#96949f" />
      <path d="M435 361L551 317L549 336L450 375Z" fill="#9896a4" />
      <path d="M434 361L450 375L591 743L589 765Z" fill="#9896a4" />
      <path d="M450 375L452 376L594 742L591 743Z" fill="#66656e" />
      <path d="M434 361L589 766" strokeWidth="2" />
      <path d="M549 336L551 317L707 718L690 704Z" fill="#9896a4" />
      <path d="M551 317L553 311L558 315L711 716L709 718Z" fill="url(#ridge)" />
      <path d="M591 743L690 704L708 718L589 764Z" fill="#9896a4" />
      <path d="M589 764L708 718L710 720L593 767Z" fill="#5c5b63" />
      <path d="M711 716L820 673L821 678L710 721Z" fill="#66666e" />
      <path d="M712 719L820 677" />
      <path d="M664 273L819 674" fill="none" />
      <circle cx="554" cy="313" r="2" fill="#444" />
    </g>
    <g transform="translate(420 260) scale(.3333)" fill="#00548f" stroke="#000" strokeWidth="3.6">
      <path d="M275 341L320 345L375 365L415 405L442 455L450 510L447 565L425 612L390 645L345 661L295 656L252 638L210 600L185 550L172 500L172 445L190 395L228 360Z" />
      <path d="M320 345L352 351L395 380L420 409L445 458L451 508L447 565" fill="none" strokeWidth="5" />
      <path d="M548 293L556 288L735 222Q748 224 752 235L865 520Q866 540 855 545L680 610Q665 612 657 600L548 315Z" />
      <path d="M752 235L865 525" strokeWidth="6" />
      {hole(379, 307)}{hole(130, 400)}{hole(491, 601)}{hole(243, 695)}{hole(487, 715)}{hole(322, 778)}
      {hole(571, 254, 9, 10)}{hole(696, 207, 8, 10)}{hole(713, 622, 9, 10)}{hole(838, 576, 9, 10)}{hole(912, 769, 8, 10)}
    </g>
    <g transform="translate(420 500) scale(.3333)" fill="#00548f" stroke="#000" strokeWidth="3.6">
      <path d="M412 18L455 20L493 40L520 72L537 115L536 160L520 198L492 225L455 235L415 225L380 198L355 155L346 112L353 72L378 38Z" />
      <path d="M455 20L493 43L519 73L537 115V160" fill="none" strokeWidth="5" />
      <path d="M540 310L590 312L638 333L680 375L705 425L716 475L711 530L690 577L655 611L610 628L560 627L512 605L475 567L445 517L433 460L438 407L462 357L498 325Z" />
      <path d="M560 312L590 314L640 337L678 377L704 427L715 477L711 530" fill="none" strokeWidth="5" />
      <path d="M764 140L772 132L945 65Q962 65 967 76L1077 355Q1080 378 1070 385L905 450L880 451L873 438L764 160Z" />
      <path d="M967 76L1077 360" strokeWidth="6" />
      {hole(564, 191)}{hole(398, 254)}{hole(643, 274)}{hole(393, 369)}{hole(756, 569)}{hole(507, 663)}
      {hole(787, 96, 9, 10)}{hole(1053, 418, 9, 10)}
      <circle cx="926" cy="464" r="9" stroke="#00f800" strokeWidth="10" />
    </g>
    <g fill="none">
      <path d="M444 303L499 281L539 383L484 405Z" stroke="#00ffff" />
      <path d="M533 289L545 322" stroke="#00ff00" />
      <path d="M518 333L529 329" stroke="#ff0000" />
      <path d="M529 329L545 323" stroke="#1e90ff" />
      <path d="M308 861L300 840" stroke="#00ff00" strokeWidth="2" />
      <path d="M297 845L297 833L305 843Z" fill="#00ff00" />
      <path d="M309 861L292 867" stroke="#ff0000" strokeWidth="2" />
      <path d="M297 863L286 869L299 868Z" fill="#e00000" />
    </g>
    <g fontFamily="Liberation Sans" fontSize="10">
      <text x="291" y="829" fill="#00ff00">Y</text>
      <text x="274" y="875" fill="#a02040">X</text>
      <text x="286" y="873" fill="#2070ff">Z</text>
    </g>
  </Scene>
);

/* ---------- property panel, status and task bar ---------- */
const PropPanel = styled.section`
  display: flex;
  margin: 7px 0 0 26px;
  padding: 0 32px 2px 1px;
  border-bottom: 1px solid ${SHADOW};
`;
const PropGrip = styled.span`
  width: 3px;
  border: 1px solid;
  border-color: #fff ${SHADOW} ${SHADOW} #fff;
`;
const PropActions = styled.div`
  display: grid;
  grid-template-columns: 22px 22px;
  grid-template-rows: 22px 22px;
  width: 49px;
  padding-left: 2px;
`;
const PropBody = styled.div`
  display: flex;
  flex: 1;
  flex-direction: column;
`;
const PropFields = styled.div`
  display: flex;
  align-items: center;
  height: 35px;
  padding: 0 0 2px 18px;
  border: 1px solid;
  border-color: ${SHADOW} ${SHADOW} #000 ${SHADOW};
`;
const PropButton = styled.button<{ $on?: boolean }>`
  display: grid;
  place-items: center;
  width: 20px;
  height: 20px;
  border: 1px solid ${SHADOW};
  ${(p) => p.$on && pressed}
`;
const PropLabel = styled.label`
  padding: 1px 0 0 1px;
  white-space: nowrap;
`;
const Field = styled.input`
  width: 96px;
  height: 20px;
  padding: 0 1px;
  margin-right: 3px;
  border: 1px solid ${SHADOW};
  background: #fff;
`;
const BendsButton = styled.button`
  width: 68px;
  height: 24px;
  margin: 3px 0 0 8px;
  border: 1px solid ${SHADOW};
  color: ${SHADOW};
  text-shadow: 1px 1px 0 #fff;
  white-space: pre;
`;
const PropTab = styled(Tab)`
  height: 22px;
  padding: 0 5px 0 2px;
`;
const StatusBar = styled.footer`
  display: flex;
  gap: 2px;
  padding: 2px 0 1px 4px;
`;
const StatusCell = styled.div<{ $w?: number }>`
  flex: ${(p) => (p.$w ? `0 0 ${p.$w}px` : "1")};
  height: 17px;
  border: 1px solid;
  border-color: ${SHADOW} #fff #fff ${SHADOW};
`;
const TaskBar = styled.nav`
  display: flex;
  align-items: flex-start;
  gap: 3px;
  height: 29px;
  padding: 2px 2px 0;
  border-top: 1px solid #fff;
`;
const TaskButton = styled.button<{ $on?: boolean; $start?: boolean }>`
  ${raised}
  display: flex;
  align-items: center;
  gap: 2px;
  height: 22px;
  flex: 0 1 ${(p) => (p.$start ? 51 : 160)}px;
  min-width: 0;
  margin-right: ${(p) => (p.$start ? 2 : 0)}px;
  padding: 0 ${(p) => (p.$start ? 1 : 4)}px 0 ${(p) => (p.$start ? 1 : 3)}px;
  font-weight: ${(p) => (p.$on || p.$start ? "bold" : "normal")};
  ${(p) => p.$on && css`
    border-color: #404040 #fff #fff #404040;
    box-shadow: inset 1px 1px 0 ${SHADOW};
    background: repeating-conic-gradient(#fff 0 25%, ${FACE} 0 50%) 0 0 / 2px 2px;
  `}
  span { overflow: hidden; white-space: nowrap; }
`;
const Lang = styled.span`
  align-self: center;
  margin: 0 2px 4px auto;
  padding: 1px 0;
  background: ${NAVY};
  color: #fff;
  font-size: 10px;
`;
const Tray = styled.div`
  display: flex;
  align-items: center;
  gap: 2px;
  height: 23px;
  width: 133px;
  padding: 0 7px 0 1px;
  border: 1px solid;
  border-color: ${SHADOW} #fff #fff ${SHADOW};
`;
const Clock = styled.time`
  margin-left: auto;
`;

const bends = Array.from({ length: 11 }, (_, i) => `Сгиб:${i + 9}`);
const cuts = Array.from({ length: 27 }, (_, i) => `Вырез в листовом теле:${i + 1}`);
const menu = [["", "Ф", "айл"], ["", "Р", "едактор"], ["", "В", "ид"], ["Опера", "ц", "ии"], ["С", "п", "ецификация"], ["С", "е", "рвис"], ["", "О", "кно"], ["", "С", "правка"], ["", "Б", "иблиотеки"]];
const modes = ["body", "curve", "plane", "surf", "compass", "filter", "spec", "weld", "sheet"];
const leftTools = "| g1 | g2 g3 g4 | g5 g5 | g6 | g7 | g8 g9 | dim g10 | t1 t2 t3 t4".split(" ");
const rightTools = [
  "point vline seg circ arc ell wave wave2 spline chamfer fillet rect collect hatch hatchbox | project",
  "m1 m2 m3 m4 m5 m6 m7 m8 m9 m10",
  "d1 d2 d3 d4 d5 d6 d7",
];
const tasks = [["combi", "COMBI5 Rel 12.025 - Qu..."], ["folder", "Z:\\DXF\\Авдюшкин\\16.01"], ["folder", "\\\\N62919\\задание\\Инст..."], ["acad", "AutoCAD 2007 - [Z:\\DXF..."], ["app", "КОМПАС-3D V8 Plus (..."], ["paint", "33.bmp - Paint"]];

export default function App() {
  return (
    <>
      <Global />
      <Window>
        <TitleBar>
          <Icon name="app" size={16} />
          <Title>КОМПАС-3D V8 Plus (ЗАЩИТА) - [ШКИС.735316.021 коля.m3d]</Title>
          <WindowControls />
        </TitleBar>
        <MenuBar>
          <Grip />
          <Icon name="doc" />
          {menu.map(([a, b, c]) => <MenuItem key={a + b + c}>{a}<u>{b}</u>{c}</MenuItem>)}
          <Spacer />
          <WindowControls />
        </MenuBar>
        <ToolRow>
          <ToolBar><Grip /><Tools list="new v open save | print preview | cut copy paste | undo redo | lib props fx | help _" /></ToolBar>
          <ToolBar><Grip /><Tools list="docL docR | docs | rough Ab | alignA alignB alignC | nA nB nC | boxA boxB | table shapes turn _" /></ToolBar>
          <ToolBar $grow>
            <Grip />
            <Tools list="lens plus minus | plusminus" />
            <ComboWrap>
              <Combo aria-label="Масштаб"><option>0.5804</option></Combo>
              <ComboArrow />
            </ComboWrap>
            <Tools list="| axes v | move fit rotate | wire hidden thin shaded |" />
            <Spacer />
            <MoreTools />
          </ToolBar>
          <ToolBar $min={40}><Grip /><Spacer /><MoreTools /></ToolBar>
        </ToolRow>
        <Main>
          <SideBar>
            <SideGroup>
              <Grip $flat />
              {modes.map((m) => (
                <ModeRow key={m}>
                  <ModeGrip />
                  <ModeButton $on={m === "sheet"} aria-label={m}><Icon name={m} size={16} /></ModeButton>
                </ModeRow>
              ))}
              {leftTools.map((t, i) =>
                t === "|" ? <Sep key={i} $flat /> : (
                  <Tool key={i} $on={t === "dim"} aria-label={t}><Icon name={t} off={t !== "dim"} /></Tool>
                ))}
              <LeftArrow aria-label="Ещё" />
            </SideGroup>
          </SideBar>
          <TreePanel>
            <PanelTitle>
              Дерево построения
              <Spacer />
              <PanelButton aria-label="Закрепить"><svg width="9" height="9" viewBox="0 0 9 9"><path d="M2 0H7V5H8V6H5V9H4V6H1V5H2ZM3 1V5H5V1Z" fill="#fff" fillRule="evenodd" /></svg></PanelButton>
              <PanelButton aria-label="Закрыть"><svg width="9" height="9" viewBox="0 0 9 9"><path d="M1 1L8 8M8 1L1 8" stroke="#fff" strokeWidth="2" /></svg></PanelButton>
            </PanelTitle>
            <TreeFrame>
              <Tree>
                {[...bends, ...cuts].map((t) => {
                  const on = t.endsWith("теле:18");
                  return (
                    <Row key={t}>
                      <Expander aria-label="Развернуть" />
                      <Dots />
                      <Icon name={t[0] === "С" ? "fold" : on ? "cutoutSel" : "cutout"} />
                      <Label $on={on}>{t}</Label>
                    </Row>
                  );
                })}
                <Row $last><Dots $wide /><Icon name="mid" /><Label>Средняя плоскость:1</Label></Row>
                <TreeEnd aria-hidden />
              </Tree>
              <ScrollBar>
                <ScrollButton $up aria-label="Вверх" />
                <Gap />
                <Thumb />
                <ScrollButton aria-label="Вниз" />
              </ScrollBar>
            </TreeFrame>
            <Tab>Построение</Tab>
          </TreePanel>
          <Viewport><Model /></Viewport>
          <SideBar>
            {rightTools.map((g) => (
              <SideGroup key={g} $right>
                <Grip $flat />
                {g.split(" ").map((t, i) => t === "|" ? <Sep key={i} $flat /> : <Tool key={i} aria-label={t}><Icon name={t} off /></Tool>)}
                <LeftArrow aria-label="Ещё" />
              </SideGroup>
            ))}
          </SideBar>
        </Main>
        <PropPanel>
          <PropGrip />
          <PropActions>
            <Tool aria-label="Создать"><Icon name="enter" off /></Tool>
            <Tool aria-label="Прервать"><Icon name="stop" /></Tool>
            <Tool aria-label="Справка"><Icon name="tip" /></Tool>
          </PropActions>
          <PropBody>
            <PropFields>
              <PropButton $on aria-label="Неподвижная грань"><Icon name="face" /></PropButton>
              <PropLabel htmlFor="fixed-face">Неподвижная <u>г</u>рань</PropLabel>
              <Field id="fixed-face" defaultValue="Объект не опреде" />
              <PropButton id="bend-pick" aria-label="Выбор сгибов"><Icon name="bends" /></PropButton>
              <PropLabel htmlFor="bend-pick">Вы<u>б</u>ор сгибов</PropLabel>
              <BendsButton disabled>Сг<u>и</u>бы{"  >>"}</BendsButton>
            </PropFields>
            <PropTab><Icon name="dim" />Параметры</PropTab>
          </PropBody>
        </PropPanel>
        <StatusBar><StatusCell /><StatusCell $w={83} /></StatusBar>
        <TaskBar>
          <TaskButton $start><Icon name="flag" size={16} /><span>Пуск</span></TaskButton>
          {tasks.map(([icon, text]) => (
            <TaskButton key={text} $on={icon === "app"}><Icon name={icon} size={16} /><span>{text}</span></TaskButton>
          ))}
          <Lang>EN</Lang>
          <Tray>
            {["trayA", "trayB", "trayC", "trayD", "trayE"].map((t) => <Icon key={t} name={t} size={16} />)}
            <Clock>15:26</Clock>
          </Tray>
        </TaskBar>
      </Window>
    </>
  );
}
